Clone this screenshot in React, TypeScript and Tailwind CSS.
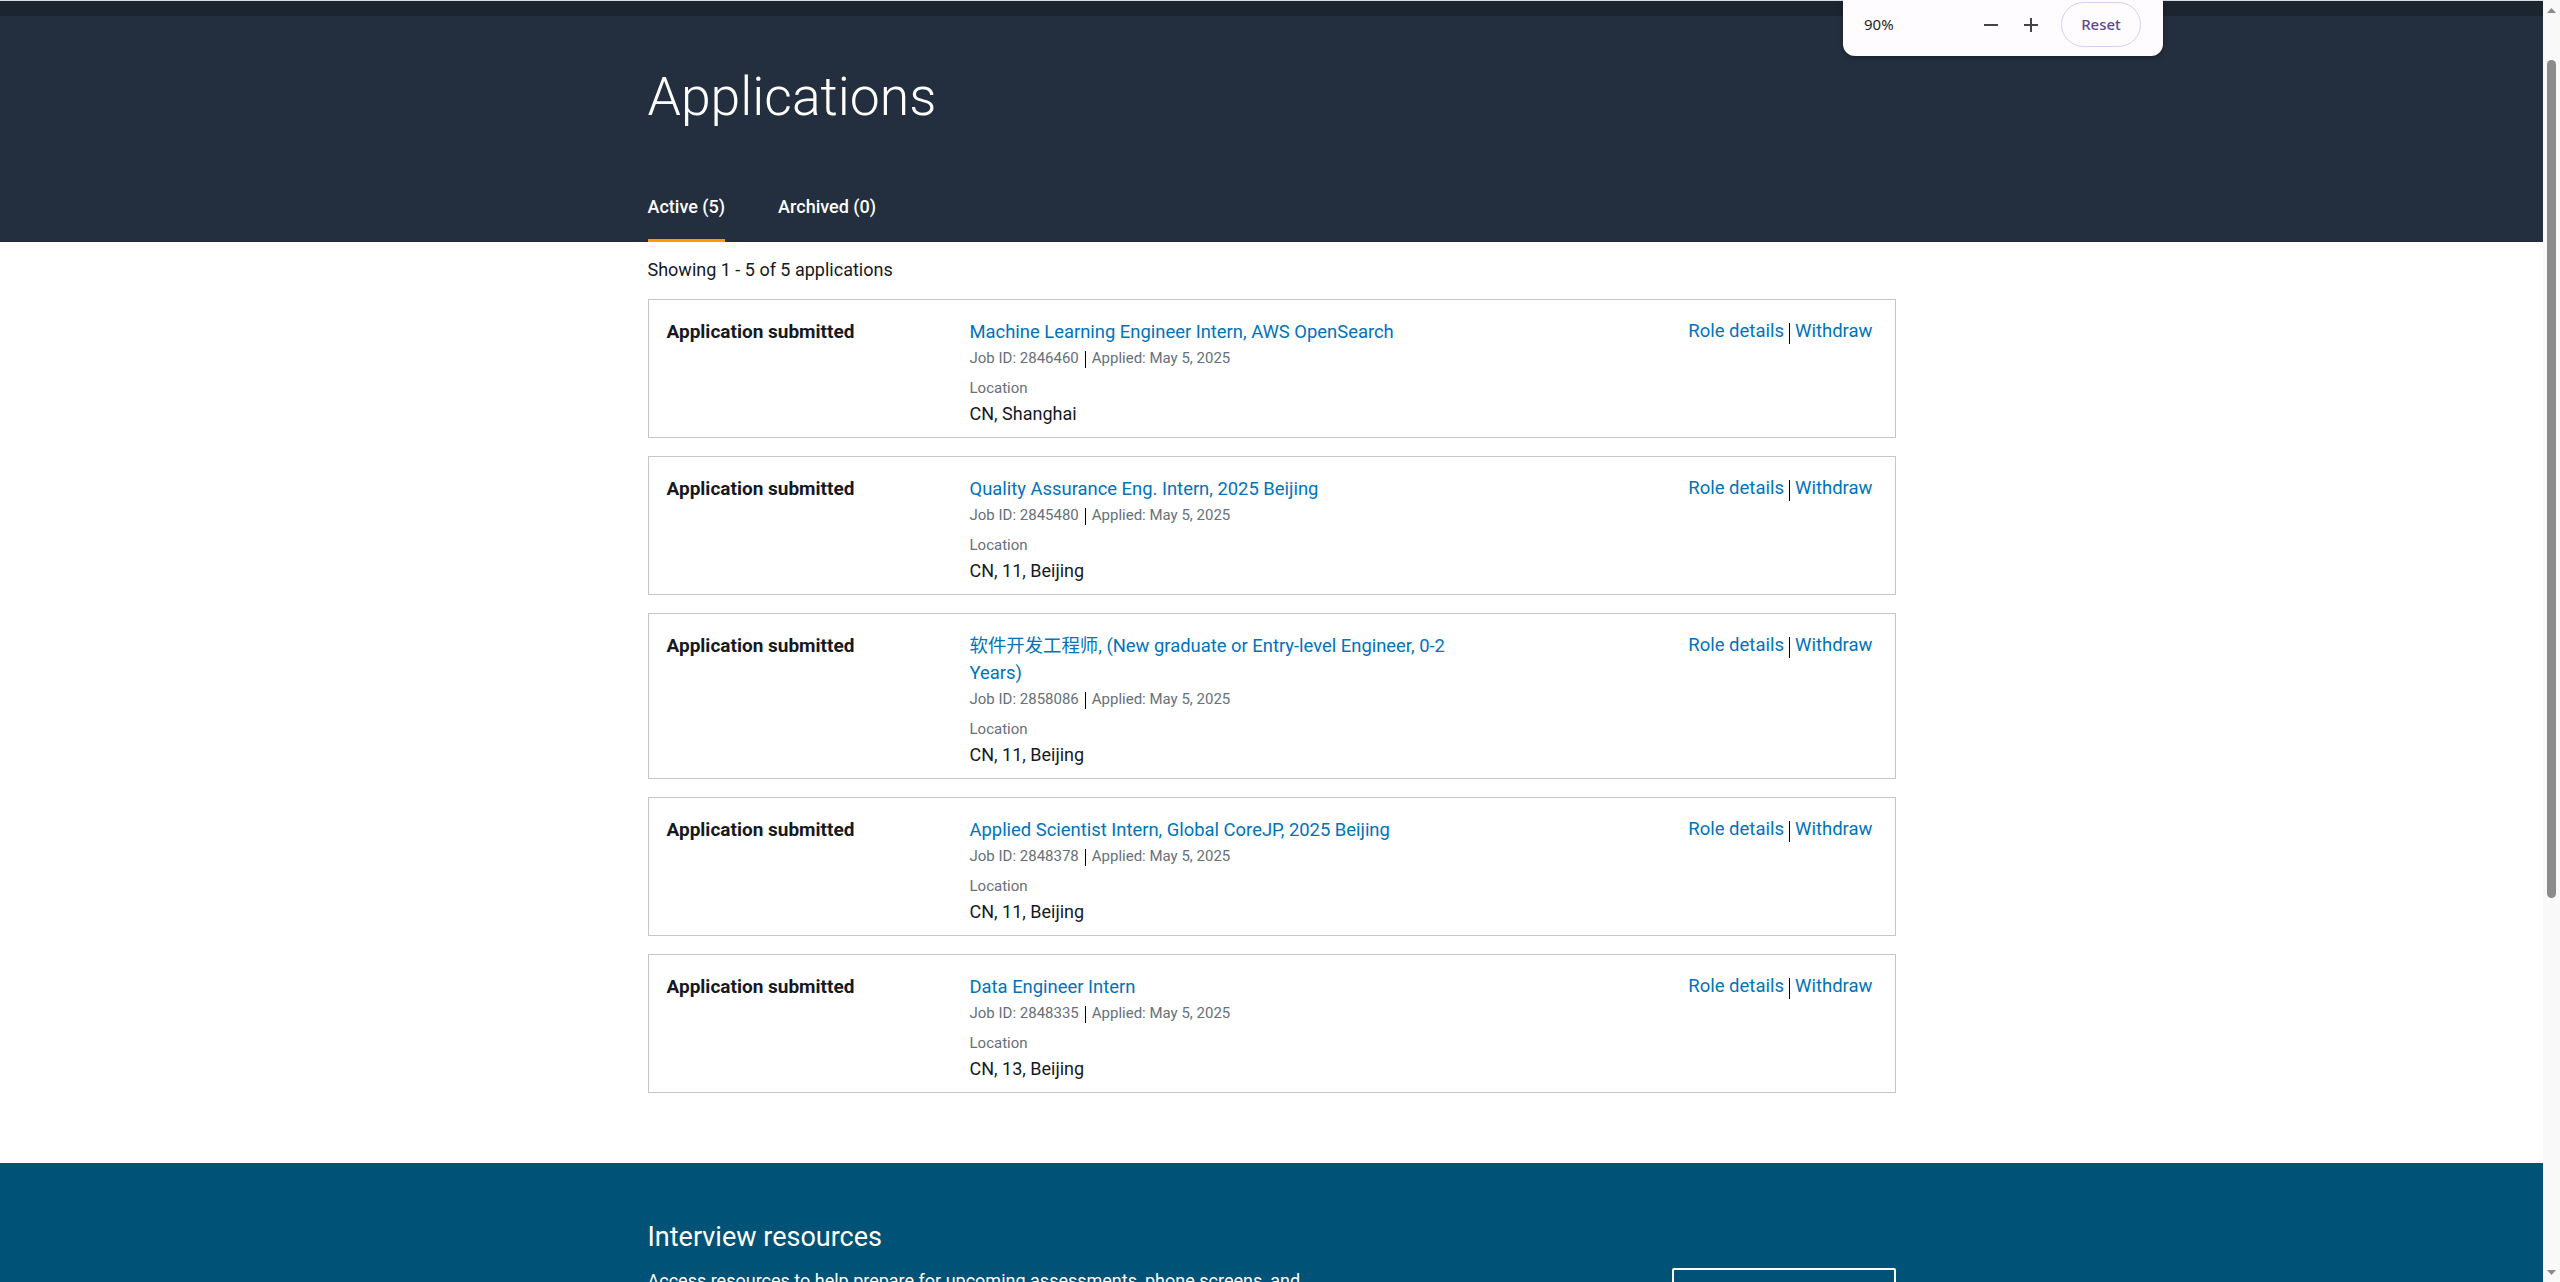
import React from 'react';

const applications = [
  { title: 'Machine Learning Engineer Intern, AWS OpenSearch', id: '2846460', location: 'CN, Shanghai' },
  { title: 'Quality Assurance Eng. Intern, 2025 Beijing', id: '2845480', location: 'CN, 11, Beijing' },
  { title: '软件开发工程师, (New graduate or Entry-level Engineer, 0-2 Years)', id: '2858086', location: 'CN, 11, Beijing' },
  { title: 'Applied Scientist Intern, Global CoreJP, 2025 Beijing', id: '2848378', location: 'CN, 11, Beijing' },
  { title: 'Data Engineer Intern', id: '2848335', location: 'CN, 13, Beijing' },
];

function ApplicationCard({ app }: { app: (typeof applications)[number] }) {
  return (
    <div className="flex border border-[#c6c6c6] pb-[10px] pl-[18px] pr-[22px] pt-[18px]">
      <div className="w-[303px] shrink-0 text-[19px] font-bold leading-[27px] text-[#16191f]">
        Application submitted
      </div>

      <div className="w-[510px] shrink-0">
        <a href="#" className="block text-[18.4px] leading-[27px] text-[#0073bb]">
          {app.title}
        </a>
        <div className="mt-[3px] flex items-center text-[15px] leading-[20px] text-[#687078]">
          <span>Job ID: {app.id}</span>
          <span className="mx-[6px] mt-[3px] h-[17px] w-px bg-black" />
          <span>Applied: May 5, 2025</span>
        </div>
        <div className="mt-[10px] text-[15px] leading-[20px] text-[#687078]">Location</div>
        <div className="mt-[3px] text-[18px] leading-[26px] text-[#16191f]">{app.location}</div>
      </div>

      {/* Actions */}
      <div className="flex flex-1 items-start justify-end">
        <div className="flex items-center text-[18.5px] leading-[27px] text-[#0073bb]">
          <a href="#">Role details</a>
          <span className="mx-[5px] mt-[4px] h-[21px] w-px bg-black" />
          <a href="#">Withdraw</a>
        </div>
      </div>
    </div>
  );
}

function ZoomBubble() {
  return (
    <div className="absolute left-[1843px] top-0 flex h-[56px] w-[320px] items-center rounded-b-[12px] bg-[#fffcff] pb-[7px] pl-[21px] pr-[21px] font-['Noto_Sans',sans-serif] shadow-[0_2px_5px_rgba(0,0,0,0.28)]">
      <span className="w-[119px] text-[15px] text-[#1f1f1f]">90%</span>
      <svg width="16" height="16" viewBox="0 0 16 16" className="text-[#444]">
        <path d="M1 8h14" stroke="currentColor" strokeWidth="2" />
      </svg>
      <svg width="16" height="16" viewBox="0 0 16 16" className="ml-[24px] text-[#444]">
        <path d="M1 8h14M8 1v14" stroke="currentColor" strokeWidth="2" />
      </svg>
      <button className="ml-[22px] flex h-[45px] w-[80px] items-center justify-center rounded-full border border-[#dccbf5] text-[15px] font-medium text-[#5f4b8b]">
        Reset
      </button>
    </div>
  );
}

function Scrollbar() {
  return (
    <div className="flex w-[17px] shrink-0 flex-col items-center bg-[#f9f9f9]">
      <svg width="9" height="5" viewBox="0 0 9 5" className="mt-[8px]">
        <path d="M4.5 0L9 5H0z" fill="#8b8b8b" />
      </svg>
      <div className="mt-[47px] h-[838px] w-[9px] rounded-full bg-[#8b8b8b]" />
      <div className="flex-1" />
      <svg width="9" height="5" viewBox="0 0 9 5" className="mb-[7px]">
        <path d="M0 0h9L4.5 5z" fill="#8b8b8b" />
      </svg>
    </div>
  );
}

export default function App() {
  return (
    <div className="flex h-[1282px] w-full overflow-hidden bg-white font-['Roboto','Noto_Sans_CJK_SC',sans-serif]">
      <div className="relative flex min-w-0 flex-1 flex-col">
        <div className="h-px shrink-0 bg-[#d9dde1]" />
        <div className="h-[15px] shrink-0 bg-[#1c2430]" />

        {/* Header */}
        <header className="shrink-0 bg-[#232f3e]">
          <div className="mx-auto w-[1248px] pt-[50px]">
            <h1 className="text-[53.5px] font-light leading-[62px] text-white">Applications</h1>
            <div className="mt-[67px] flex gap-[53px]">
              <button className="border-b-[3px] border-[#ff9900] pb-[20px] text-[18px] font-medium leading-[24px] text-white">
                Active (5)
              </button>
              <button className="border-b-[3px] border-transparent pb-[20px] text-[18px] font-medium leading-[24px] text-white">
                Archived (0)
              </button>
            </div>
          </div>
        </header>

        {/* List */}
        <main className="mx-auto w-[1248px] shrink-0 pb-[70px]">
          <p className="mt-[16px] text-[18px] leading-[24px] text-[#16191f]">Showing 1 - 5 of 5 applications</p>
          <div className="mt-[17px] flex flex-col gap-[18px]">
            {applications.map((app) => (
              <ApplicationCard key={app.id} app={app} />
            ))}
          </div>
        </main>

        {/* Interview resources */}
        <footer className="shrink-0 bg-[#005276]">
          <div className="mx-auto flex w-[1248px] items-start justify-between pb-[60px] pt-[57px]">
            <div className="w-[700px]">
              <h2 className="text-[27px] leading-[34px] text-white">Interview resources</h2>
              <p className="mt-[13px] text-[18px] leading-[27px] text-white">
                Access resources to help prepare for upcoming assessments, phone screens, and interviews.
              </p>
            </div>
            <a
              href="#"
              className="mt-[48px] flex h-[48px] w-[224px] items-center justify-center rounded-[2px] border-2 border-white text-[18px] font-bold text-white"
            >
              Interview prep
            </a>
          </div>
        </footer>

        <ZoomBubble />
      </div>
      <Scrollbar />
    </div>
  );
}
